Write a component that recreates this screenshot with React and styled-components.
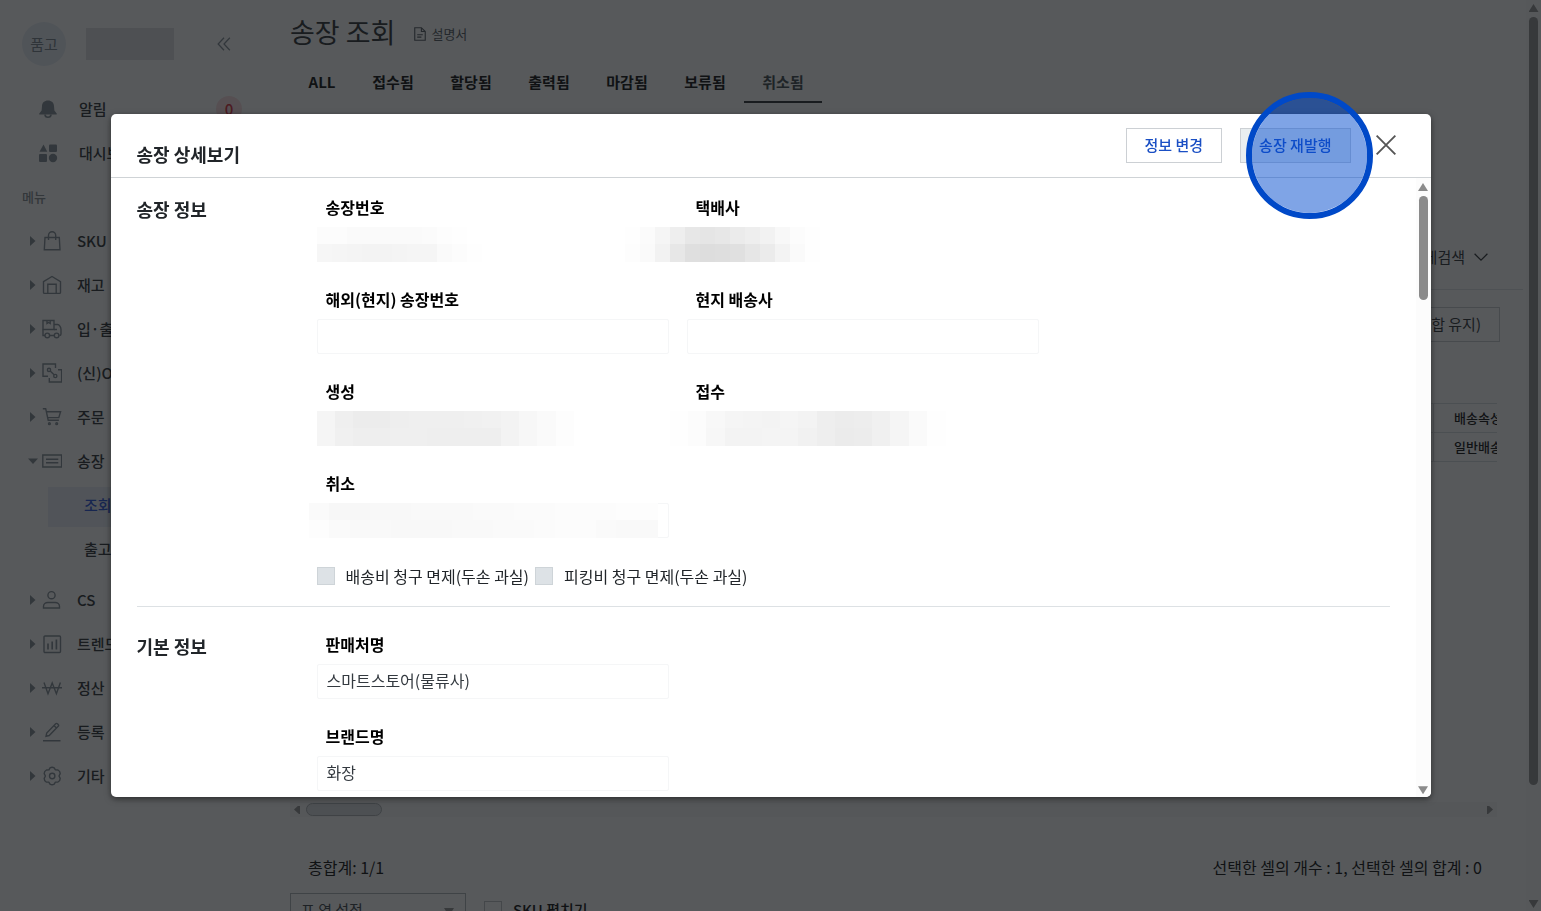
import React from 'react';
import styled, { createGlobalStyle } from 'styled-components';

const GlobalStyle = createGlobalStyle`
  * {
    box-sizing: border-box;
  }
  body {
    margin: 0;
    overflow: hidden;
    background: #fff;
    color: #212529;
    font-family: "Noto Sans CJK KR", "Noto Sans", sans-serif;
    font-size: 15px;
    line-height: 24px;
  }
  button, input, select {
    font: inherit;
    color: inherit;
  }
  h1, h2, h3, p, ul {
    margin: 0;
    padding: 0;
  }
`

const Icon = ({ size = 20, children }) => (
  <svg width={size} height={size} viewBox="0 0 20 20" fill="none" stroke="currentColor" strokeWidth="1.4" aria-hidden="true">
    {children}
  </svg>
)

const icons = {
  bell: (
    <g fill="currentColor" stroke="none">
      <path d="M10 1.500c3.700 0 5.800 2.300 6 5.500l.4 4.500 2.300 3c.3.500.1 1-.5 1H1.800c-.6 0-.8-.5-.5-1l2.300-3L4 7c.2-3.200 2.300-5.500 6-5.500z" />
      <path d="M6.200 15.500h7.600a3.800 3.600 0 0 1-7.600 0zm1.700 0a2.100 1.900 0 0 0 4.200 0z" fillRule="evenodd" />
    </g>
  ),
  dashboard: (
    <g fill="currentColor" stroke="none">
      <path d="M5.500 1.500 9.300 8.800H1.500z" />
      <rect x="11" y="1.500" width="8" height="7.500" rx="1" />
      <rect x="1" y="11" width="8" height="8" rx="1" />
      <circle cx="15" cy="15" r="4.200" />
    </g>
  ),
  bag: (
    <>
      <path d="M3 6.500h14.300l.7 12.200H2.300z" />
      <path d="M6.500 9V4.300a3.600 3.600 0 0 1 7.200 0V9" />
    </>
  ),
  warehouse: (
    <>
      <path d="M1.500 6.600 10 1.500l8.500 5.100v10.800c0 .6-.4 1-1 1h-15c-.6 0-1-.4-1-1z" />
      <path d="M5.800 18.400V9.200h8.400v9.200" />
    </>
  ),
  truck: (
    <>
      <path d="M1 1.500h11v9H1zM5 1.500v3l1.600-1 1.600 1v-3" />
      <path d="M1 10.500v6h2M7.500 16.500h4.500M12 5.500h3.600c1.600 0 3.400 2.600 3.400 5v4.500c0 1-.6 1.500-1.600 1.500M12 10.500h3" />
      <circle cx="5.300" cy="16.400" r="2.300" />
      <circle cx="14.600" cy="16.400" r="2.300" />
    </>
  ),
  oms: (
    <>
      <path d="M6 13.300H1V1h12.500v4M16 6.800h3.600V19H7.300v-4" />
      <circle cx="7" cy="6.900" r="1.600" />
      <circle cx="13.300" cy="13" r="1.600" />
      <path d="m8.200 8.100 3.900 3.700" />
    </>
  ),
  cart: (
    <>
      <path d="M.8 1.700h2.900l2.500 11.500h10.700M4.400 4.800h14.200l-1.800 5.800H5.700" />
      <circle cx="7.400" cy="16.700" r=".9" />
      <circle cx="14.700" cy="16.700" r=".9" />
    </>
  ),
  invoice: (
    <>
      <path d="M.8 4h18.800v12H.8z" />
      <path d="M4 8.300h12.300M4 11.700h12.300" />
    </>
  ),
  user: (
    <>
      <circle cx="9.500" cy="5.200" r="3.600" />
      <path d="M1.500 18v-1.500c0-2.300 2-4 4.300-4h7.400c2.300 0 4.300 1.700 4.300 4V18z" />
    </>
  ),
  chart: (
    <>
      <rect x="2" y="2" width="16.500" height="16.500" rx="1" />
      <path d="M6 9.500v6M10.200 7.500v8M14.400 5.500v10" strokeWidth="1.700" />
    </>
  ),
  won: <path d="M2 4.500 6 15.800 10.200 5l4.200 10.800 4-11.300M0 9.800h20.500" />,
  edit: (
    <path d="M1 18.700h17.500M4 14.300l.7-3.300 9-9.200c.5-.5 1.200-.5 1.700 0l.8.8c.5.5.5 1.200 0 1.700l-9 9.200zM12 3.500l2.400 2.400" />
  ),
  gear: (
    <>
      <path d="M8 1.800c1-.6 3.200-.6 4.200 0l1.200 2.100 2.600.1c1.200.7 2.200 2.300 2.200 3.600L17 10l1.200 2.400c0 1.300-1 2.900-2.200 3.600l-2.600.1-1.200 2.100c-1 .6-3.200.6-4.200 0l-1.200-2.100-2.600-.1C3.200 15.300 2.200 13.700 2.200 12.400L3.400 10 2.200 7.600C2.200 6.300 3.200 4.700 4.400 4L7 3.900z" strokeLinejoin="round" />
      <circle cx="10.200" cy="10" r="2.700" />
    </>
  ),
}

const menu = [
  { icon: 'bag', label: 'SKU' },
  { icon: 'warehouse', label: '재고' },
  { icon: 'truck', label: '입·출고' },
  { icon: 'oms', label: '(신)OMS' },
  { icon: 'cart', label: '주문' },
  { icon: 'invoice', label: '송장', children: ['조회', '출고'] },
  { icon: 'user', label: 'CS' },
  { icon: 'chart', label: '트렌드' },
  { icon: 'won', label: '정산' },
  { icon: 'edit', label: '등록' },
  { icon: 'gear', label: '기타' },
]

const tabs = ['ALL', '접수됨', '할당됨', '출력됨', '마감됨', '보류됨', '취소됨']

// shades of the masked values, one list per row of cells
const masks = {
  number: [
    [252, 252, 250, 250, 250, 250, 250, 251, 253, 254, 255],
    [246, 245, 244, 243, 243, 244, 245, 245, 250, 252, 254],
  ],
  carrier: [
    [254, 251, 245, 238, 231, 229, 231, 235, 238, 242, 248, 252, 254],
    [253, 250, 242, 231, 223, 221, 222, 224, 230, 235, 243, 250, 254],
  ],
  created: [
    [245, 239, 236, 236, 238, 239, 239, 239, 240, 241, 243, 247, 250, 253, 255],
    [245, 240, 238, 238, 239, 239, 238, 238, 238, 238, 243, 247, 250, 253, 255],
  ],
  received: [
    [254, 252, 248, 245, 244, 243, 245, 243, 238, 236, 237, 240, 245, 250, 254],
    [254, 252, 247, 243, 243, 244, 244, 241, 238, 235, 236, 240, 245, 250, 254],
  ],
  canceled: [
    [250, 247, 247, 248, 248, 249, 249, 249, 250, 250, 251, 251, 252, 252, 252, 253, 253],
    [253, 250, 249, 249, 248, 248, 248, 249, 249, 250, 250, 251, 252, 252, 250, 249, 249],
  ],
}

const Mask = ({ name, offset, width }) => (
  <MaskBox $offset={offset} $width={width}>
    {masks[name].map((row, i) => (
      <MaskRow key={i}>
        {row.map((shade, j) => <MaskCell key={j} style={{ background: `rgb(${shade}, ${shade}, ${shade})` }} />)}
      </MaskRow>
    ))}
  </MaskBox>
)

const Field = ({ id, label, value = '', plain, mask }) => (
  <FieldBox>
    <FieldLabel htmlFor={id}>{label}</FieldLabel>
    <FieldControl>
      <FieldInput id={id} defaultValue={value} $plain={plain} readOnly />
      {mask}
    </FieldControl>
  </FieldBox>
)

const Sidebar = () => (
  <SidebarBox>
    <Account>
      <Avatar>품고</Avatar>
      <AccountName />
      <CollapseButton aria-label="메뉴 접기">
        <Icon size={18}><path d="M10 3 3.500 10l6.500 7M16.500 3 10 10l6.500 7" /></Icon>
      </CollapseButton>
    </Account>
    <ShortcutLink href="#alarm"><Icon>{icons.bell}</Icon><span>알림</span><Badge>0</Badge></ShortcutLink>
    <ShortcutLink href="#dashboard"><Icon>{icons.dashboard}</Icon><span>대시보드</span></ShortcutLink>
    <MenuCaption>메뉴</MenuCaption>
    <MenuList>
      {menu.map(({ icon, label, children }) => (
        <li key={label}>
          <MenuLink href={`#${icon}`}>
            <Caret $open={!!children} />
            <Icon>{icons[icon]}</Icon>
            <span>{label}</span>
          </MenuLink>
          {children && (
            <SubMenu>
              {children.map((item, i) => <li key={item}><SubLink href={`#${icon}-${i}`} $active={i === 0}>{item}</SubLink></li>)}
            </SubMenu>
          )}
        </li>
      ))}
    </MenuList>
  </SidebarBox>
)

const Invoices = () => (
  <Main>
    <TitleRow>
      <PageTitle>송장 조회</PageTitle>
      <ManualLink href="#manual">
        <Icon size={14}><path d="M2.500 1h9.500l5.500 5.500V19h-15zM12 1v5.500h5.500M6 11h8M6 14.500h6" strokeWidth="1.600" /></Icon>
        설명서
      </ManualLink>
    </TitleRow>
    <Tabs>
      {tabs.map((tab, i) => <Tab key={tab} $first={i === 0} $active={tab === '취소됨'}>{tab}</Tab>)}
    </Tabs>
    <SearchArea>
      <SearchToggle>
        상세검색
        <Icon size={16}><path d="m2 6 8 8 8-8" strokeWidth="1.600" /></Icon>
      </SearchToggle>
    </SearchArea>
    <Toolbar>
      <OutlineButton>송장 분리(합 유지)</OutlineButton>
    </Toolbar>
    <GridArea>
      <Table>
        <thead><tr><th aria-label="번호" /><th>배송속성</th></tr></thead>
        <tbody><tr><td /><td>일반배송</td></tr></tbody>
      </Table>
    </GridArea>
    <HorizontalBar>
      <Arrow $dir="left" />
      <HorizontalThumb />
      <Arrow $dir="right" />
    </HorizontalBar>
    <Summary>
      <span>총합계: 1/1</span>
      <span>선택한 셀의 개수 : 1, 선택한 셀의 합계 : 0</span>
    </Summary>
    <BottomRow>
      <ColumnSelect>
        <select aria-label="표 열 설정"><option>표 열 설정</option></select>
        <Arrow $dir="down" />
      </ColumnSelect>
      <ExpandLabel><input type="checkbox" />SKU 펼치기</ExpandLabel>
    </BottomRow>
  </Main>
)

const DetailDialog = () => (
  <Dialog role="dialog" aria-modal="true" aria-labelledby="dialog-title">
    <DialogHeader>
      <DialogTitle id="dialog-title">송장 상세보기</DialogTitle>
      <DialogButton>정보 변경</DialogButton>
      <DialogButton $shaded>송장 재발행</DialogButton>
      <CloseButton aria-label="닫기">
        <Icon size={22}><path d="m1.500 1.500 17 17M18.500 1.500l-17 17" strokeWidth="1.700" /></Icon>
      </CloseButton>
    </DialogHeader>
    <DialogBody>
      <Sections>
        <Section>
          <SectionTitle>송장 정보</SectionTitle>
          <Fields>
            <Field id="number" label="송장번호" plain mask={<Mask name="number" offset={0} width={165} />} />
            <Field id="carrier" label="택배사" plain mask={<Mask name="carrier" offset={-62} width={195} />} />
            <Field id="local-number" label="해외(현지) 송장번호" />
            <Field id="local-carrier" label="현지 배송사" />
            <Field id="created" label="생성" plain mask={<Mask name="created" offset={0} width={276} />} />
            <Field id="received" label="접수" plain mask={<Mask name="received" offset={-17} width={276} />} />
            <Field id="canceled" label="취소" mask={<Mask name="canceled" offset={-8} width={349} />} />
            <Checks>
              <CheckLabel><input type="checkbox" disabled />배송비 청구 면제(두손 과실)</CheckLabel>
              <CheckLabel><input type="checkbox" disabled />피킹비 청구 면제(두손 과실)</CheckLabel>
            </Checks>
          </Fields>
        </Section>
        <Section>
          <SectionTitle>기본 정보</SectionTitle>
          <Fields $single>
            <Field id="seller" label="판매처명" value="스마트스토어(물류사)" />
            <Field id="brand" label="브랜드명" value="화장" />
          </Fields>
        </Section>
      </Sections>
      <VerticalBar $inset>
        <Arrow $dir="up" />
        <VerticalThumb $share={17} />
        <Arrow $dir="down" />
      </VerticalBar>
    </DialogBody>
    <ClickMarker />
  </Dialog>
)

const App = () => (
  <>
    <GlobalStyle />
    <Page>
      <Sidebar />
      <Invoices />
      <VerticalBar>
        <Arrow $dir="up" />
        <VerticalThumb $share={85} />
        <Arrow $dir="down" />
      </VerticalBar>
    </Page>
    <Backdrop>
      <DetailDialog />
    </Backdrop>
  </>
)

const Page = styled.div`
  display: flex;
  height: 100vh;
  overflow: hidden;
`

/* sidebar */
const SidebarBox = styled.nav`
  flex: none;
  width: 260px;
  color: #212529;
  svg {
    flex: none;
    color: #7c878f;
  }
`
const Account = styled.div`
  display: flex;
  align-items: center;
  height: 87px;
  padding: 0 27px 0 22px;
`
const Avatar = styled.div`
  display: flex;
  align-items: center;
  justify-content: center;
  width: 44px;
  height: 44px;
  border-radius: 50%;
  background: #e6ecf4;
  color: #6f7b86;
`
const AccountName = styled.div`
  width: 88px;
  height: 32px;
  margin-left: 20px;
  background: #dfdfe1;
`
const CollapseButton = styled.button`
  display: flex;
  margin-left: auto;
  padding: 0;
  border: 0;
  background: none;
`
const ShortcutLink = styled.a`
  display: flex;
  align-items: center;
  gap: 21px;
  height: 44px;
  padding: 0 18px 0 38px;
  color: inherit;
  font-weight: 500;
  text-decoration: none;
`
const Badge = styled.span`
  display: flex;
  align-items: center;
  justify-content: center;
  width: 26px;
  height: 26px;
  margin-left: auto;
  border-radius: 50%;
  background: #fadbde;
  color: #d8202f;
`
const MenuCaption = styled.p`
  height: 44px;
  padding-left: 22px;
  color: #7d848a;
  font-size: 13px;
  font-weight: 500;
  line-height: 44px;
`
const MenuList = styled.ul`
  list-style: none;
`
const MenuLink = styled.a`
  display: flex;
  align-items: center;
  height: 44px;
  padding-left: 28px;
  color: inherit;
  font-weight: 500;
  text-decoration: none;
  span {
    margin-left: 15px;
  }
`
const Caret = styled.i`
  width: 10px;
  height: 10px;
  margin-right: 4px;
  background: #7b868e;
  clip-path: ${({ $open }) => $open ? 'polygon(0 25%, 100% 25%, 50% 80%)' : 'polygon(20% 0, 75% 50%, 20% 100%)'};
`
const SubMenu = styled.ul`
  padding: 4px 0 3px;
  list-style: none;
`
const SubLink = styled.a`
  display: block;
  height: 40px;
  margin: 0 0 4px 48px;
  padding-left: 36px;
  background: ${({ $active }) => $active ? '#e8eef6' : 'none'};
  color: ${({ $active }) => $active ? '#1a48d8' : 'inherit'};
  font-weight: 500;
  line-height: 36px;
  text-decoration: none;
`

/* invoice list */
const Main = styled.main`
  flex: 1;
  min-width: 0;
  padding: 0 3px 0 30px;
`
const TitleRow = styled.div`
  display: flex;
  align-items: center;
  gap: 18px;
  height: 62px;
  padding-top: 2px;
`
const PageTitle = styled.h1`
  font-size: 27px;
  font-weight: 400;
  line-height: 36px;
`
const ManualLink = styled.a`
  display: flex;
  align-items: center;
  gap: 4px;
  padding-top: 4px;
  color: #495057;
  font-size: 13px;
  text-decoration: none;
`
const Tabs = styled.div`
  display: flex;
`
const Tab = styled.button`
  min-width: ${({ $first }) => $first ? '64px' : '78px'};
  height: 41px;
  padding: 0;
  border: 0;
  border-bottom: 2px solid ${({ $active }) => $active ? '#212529' : 'transparent'};
  background: none;
  color: ${({ $active }) => $active ? '#343f44' : '#000'};
  font-weight: 700;
`
const SearchArea = styled.div`
  display: flex;
  align-items: flex-end;
  justify-content: flex-end;
  height: 187px;
  padding: 0 34px 20px 0;
  border-bottom: 1px solid #dee2e6;
`
const SearchToggle = styled.button`
  display: flex;
  align-items: center;
  gap: 8px;
  padding: 0;
  border: 0;
  background: none;
`
const Toolbar = styled.div`
  display: flex;
  justify-content: flex-end;
  padding: 17px 23px 61px 0;
`
const OutlineButton = styled.button`
  height: 35px;
  padding: 0 18px 2px;
  border: 1px solid #c4c9ce;
  background: none;
`
const GridArea = styled.div`
  height: 399px;
  margin-right: 26px;
  overflow: hidden;
`
const Table = styled.table`
  width: calc(100% + 20px);
  border-collapse: collapse;
  color: #000;
  font-size: 13px;
  table-layout: fixed;
  th, td {
    height: 29px;
    padding: 0 0 0 20px;
    border: 1px solid #d5d9dd;
    font-weight: 500;
    line-height: 20px;
    text-align: left;
    white-space: nowrap;
  }
  th:last-child {
    width: 83px;
  }
`
const Arrow = styled.i`
  flex: none;
  width: 10px;
  height: 8px;
  background: #8b8b8b;
  clip-path: ${({ $dir }) => ({
    up: 'polygon(50% 0, 100% 100%, 0 100%)',
    down: 'polygon(0 0, 100% 0, 50% 100%)',
    left: 'polygon(20% 50%, 80% -20%, 80% 120%)',
    right: 'polygon(80% 50%, 20% -20%, 20% 120%)',
  })[$dir]};
`
const HorizontalBar = styled.div`
  display: flex;
  align-items: center;
  height: 15px;
  margin-right: 26px;
  padding: 0 2px;
  background: #f7f7f7;
  i:last-child {
    margin-left: auto;
  }
`
const HorizontalThumb = styled.div`
  width: 76px;
  height: 13px;
  margin-left: 4px;
  border: 1px solid #a8acb0;
  border-radius: 7px;
  background: #dcdfe2;
`
const Summary = styled.div`
  display: flex;
  justify-content: space-between;
  margin-top: 38px;
  padding: 0 41px 0 18px;
  color: #000;
  font-size: 16px;
`
const BottomRow = styled.div`
  display: flex;
  gap: 18px;
  margin-top: 14px;
  color: #000;
`
const ColumnSelect = styled.div`
  position: relative;
  width: 176px;
  select {
    width: 100%;
    height: 35px;
    padding: 0 10px 2px;
    appearance: none;
    border: 1px solid #a9afb4;
    border-radius: 0;
    background: none;
    color: #343a40;
  }
  i {
    position: absolute;
    top: 15px;
    right: 12px;
  }
`
const ExpandLabel = styled.label`
  display: flex;
  align-items: center;
  gap: 11px;
  height: 34px;
  font-weight: 500;
  input {
    width: 18px;
    height: 18px;
    margin: 0;
    appearance: none;
    border: 1px solid #b9bec3;
  }
`

/* scroll bars */
const VerticalBar = styled.div`
  display: flex;
  flex: none;
  flex-direction: column;
  align-items: center;
  width: 15px;
  padding: ${({ $inset }) => $inset ? '5px 0 3px' : '4px 0 3px'};
  background: #fcfcfc;
  i:last-child {
    margin-top: auto;
  }
`
const VerticalThumb = styled.div`
  width: 9px;
  height: ${({ $share }) => $share}%;
  margin-top: 5px;
  border-radius: 5px;
  background: #8b8b8b;
`

/* dialog */
const Backdrop = styled.div`
  position: fixed;
  inset: 0;
  display: flex;
  align-items: center;
  justify-content: center;
  background: rgba(22, 25, 28, 0.72);
`
const Dialog = styled.section`
  position: relative;
  display: flex;
  flex-direction: column;
  width: 90%;
  max-width: 1320px;
  height: 75vh;
  border-radius: 5px;
  background: #fff;
  box-shadow: 0 2px 6px rgba(0, 0, 0, 0.5);
`
const DialogHeader = styled.header`
  display: flex;
  align-items: flex-start;
  gap: 18px;
  height: 64px;
  padding: 14px 34px 0 26px;
  border-bottom: 1px solid #cfd3d6;
`
const DialogTitle = styled.h2`
  margin: 12px auto 0 0;
  font-size: 18px;
  font-weight: 700;
  line-height: 28px;
`
const DialogButton = styled.button`
  height: 35px;
  padding: 0 18px;
  border: 1px solid #ccd0d4;
  background: ${({ $shaded }) => $shaded ? '#e9eef0' : '#fff'};
  color: #1a4fc4;
  font-weight: 500;
`
const CloseButton = styled.button`
  display: flex;
  align-items: center;
  height: 35px;
  margin-left: 6px;
  padding: 0;
  border: 0;
  background: none;
  color: #555;
`
const DialogBody = styled.div`
  display: flex;
  flex: 1;
  min-height: 0;
  overflow: hidden;
  border-radius: 0 0 5px 5px;
`
const Sections = styled.div`
  flex: 1;
  overflow: hidden;
  padding: 18px 26px 0;
`
const Section = styled.section`
  display: grid;
  grid-template-columns: 180px 1fr;
  & + & {
    margin-top: 18px;
    padding-top: 26px;
    border-top: 1px solid #dde1e4;
  }
`
const SectionTitle = styled.h3`
  font-size: 18px;
  font-weight: 700;
  line-height: 26px;
`
const Fields = styled.div`
  display: grid;
  grid-template-columns: ${({ $single }) => $single ? 'minmax(0, 352px)' : 'repeat(2, minmax(0, 352px))'};
  gap: 26px 18px;
`
const FieldBox = styled.div`
  display: flex;
  flex-direction: column;
  gap: 9px;
`
const FieldLabel = styled.label`
  padding-left: 9px;
  color: #000;
  font-size: 16px;
  font-weight: 700;
  line-height: 22px;
`
const FieldControl = styled.div`
  position: relative;
  height: 35px;
`
const FieldInput = styled.input`
  width: 100%;
  height: 35px;
  padding: 0 9px 2px;
  border: 1px solid ${({ $plain }) => $plain ? 'transparent' : '#f5f6f7'};
  border-radius: 2px;
  background: #fff;
  color: #343a40;
  font-size: 16px;
`
const MaskBox = styled.div`
  position: absolute;
  top: 0;
  left: ${({ $offset }) => $offset}px;
  display: flex;
  flex-direction: column;
  width: ${({ $width }) => $width}px;
  height: 100%;
`
const MaskRow = styled.div`
  display: flex;
  flex: 1;
`
const MaskCell = styled.i`
  flex: 1;
`
const Checks = styled.div`
  display: flex;
  grid-column: 1 / -1;
  gap: 6px;
`
const CheckLabel = styled.label`
  display: flex;
  align-items: center;
  gap: 11px;
  font-size: 16px;
  input {
    width: 18px;
    height: 18px;
    margin: 0;
    appearance: none;
    border: 1px solid #ced4d8;
    background: #dde2e6;
  }
`
const ClickMarker = styled.div`
  position: absolute;
  top: -22px;
  right: 58px;
  width: 127px;
  height: 127px;
  border: 6px solid #0049c8;
  border-radius: 50%;
  background: rgba(0, 73, 205, 0.5);
  background-clip: padding-box;
  pointer-events: none;
`

export default App
